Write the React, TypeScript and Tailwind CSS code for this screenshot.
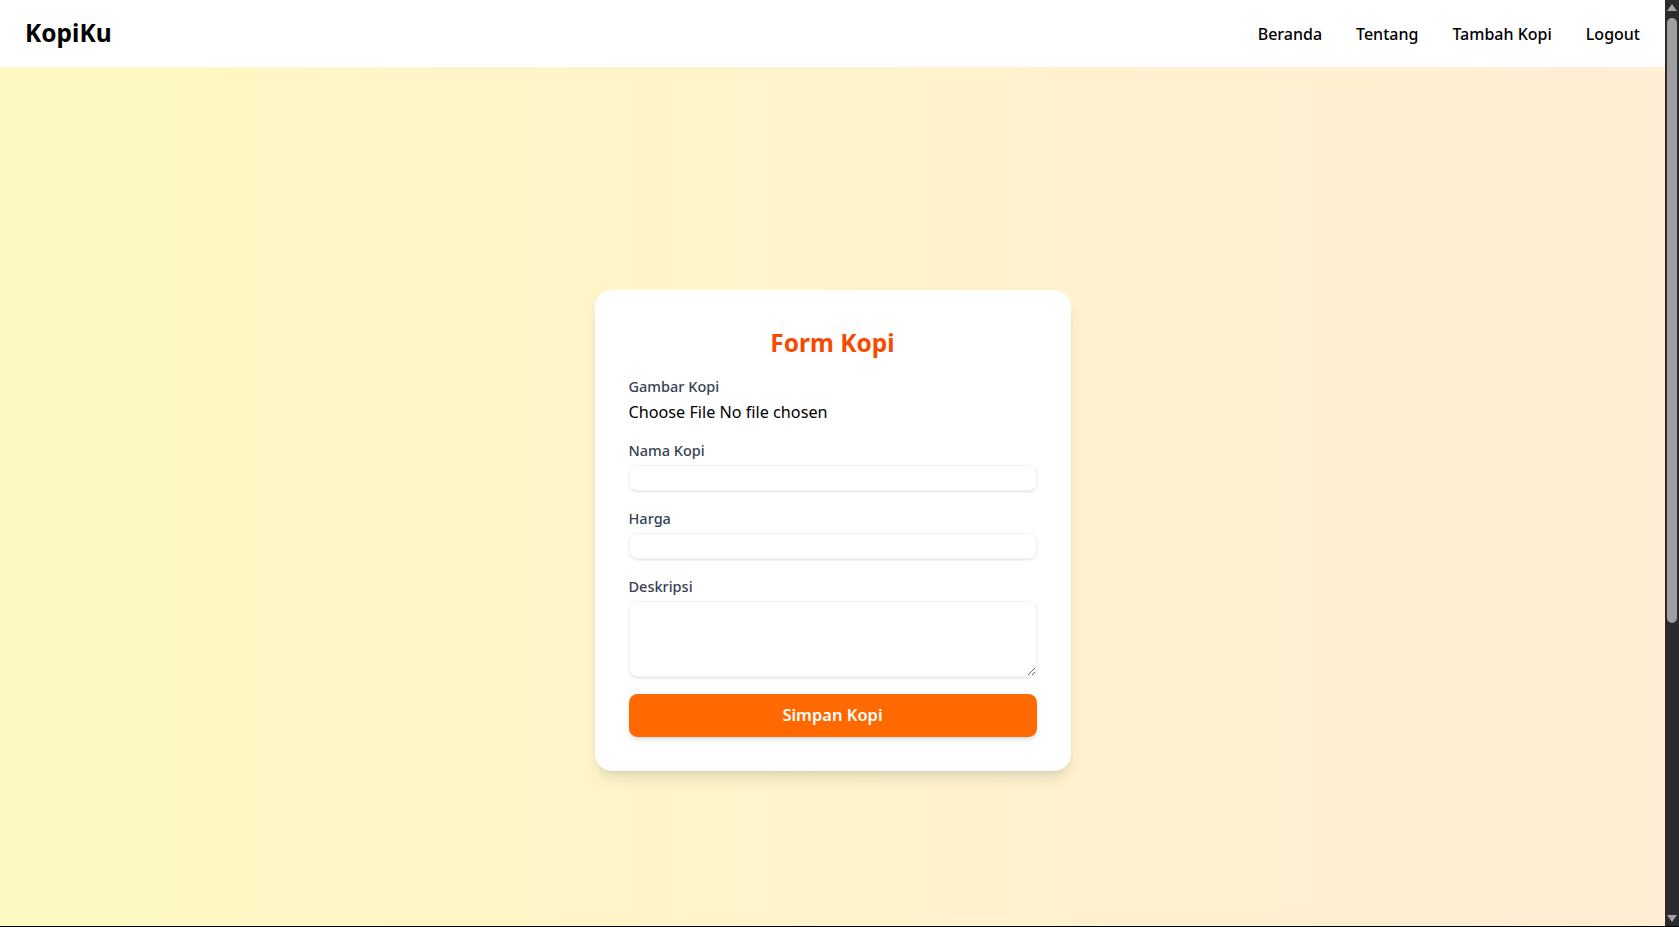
import React from "react";

const font = { fontFamily: '"Noto Sans", "Open Sans", sans-serif' };

function Field({ label, children }: { label: string; children: React.ReactNode }) {
  return (
    <div>
      <label className="block text-[14.5px] leading-[21px] font-medium text-gray-700 mb-[4px]">{label}</label>
      {children}
    </div>
  );
}

export default function App() {
  return (
    <div className="relative flex h-[927px] w-full overflow-hidden" style={font}>
      <div className="flex min-w-0 flex-1 flex-col overflow-hidden bg-linear-to-r from-yellow-100 to-orange-100">
        <nav className="flex h-[67px] shrink-0 items-center justify-between bg-white px-[25px]">
          <div className="text-[24.5px] font-bold text-black">KopiKu</div>
          <div className="flex items-center gap-[34px] text-[16px] font-medium text-black">
            <a>Beranda</a>
            <a>Tentang</a>
            <a>Tambah Kopi</a>
            <a>Logout</a>
          </div>
        </nav>
        <main className="flex h-[927px] shrink-0 items-center justify-center">
          <div className="w-[476px] rounded-[17px] bg-white p-[34px] shadow-lg">
            <h2 className="mb-[16px] pt-[2px] text-center text-[24.5px] leading-[34px] font-bold text-orange-600">Form Kopi</h2>
            <div className="flex flex-col gap-[17px]">
              <Field label="Gambar Kopi">
                <div className="text-[16.2px] leading-[22px] text-black">Choose File No file chosen</div>
              </Field>
              <Field label="Nama Kopi">
                <input className="block h-[26px] w-full rounded-[8.5px] border border-gray-100 shadow-sm outline-none" />
              </Field>
              <Field label="Harga">
                <input className="block h-[26px] w-full rounded-[8.5px] border border-gray-100 shadow-sm outline-none" />
              </Field>
              <Field label="Deskripsi">
                <textarea className="block h-[76px] w-full rounded-[8.5px] border border-gray-100 shadow-sm outline-none" />
              </Field>
              <button className="h-[43px] w-full rounded-[8.5px] bg-orange-500 text-[16.5px] font-semibold text-white shadow-md">
                Simpan Kopi
              </button>
            </div>
          </div>
        </main>
      </div>
      <div className="relative flex w-[14px] shrink-0 flex-col items-center bg-[#2b2b2b]">
        <div className="mt-[4px] h-0 w-0 border-x-[5px] border-b-[7px] border-x-transparent border-b-[#a3a3a3]" />
        <div className="mt-[7px] h-[605px] w-[10px] rounded-[5px] bg-[#9f9f9f]" />
        <div className="mt-auto mb-[5px] h-0 w-0 border-x-[5px] border-t-[7px] border-x-transparent border-t-[#a3a3a3]" />
      </div>
      <div className="absolute bottom-0 left-0 right-0 h-px bg-black" />
    </div>
  );
}
